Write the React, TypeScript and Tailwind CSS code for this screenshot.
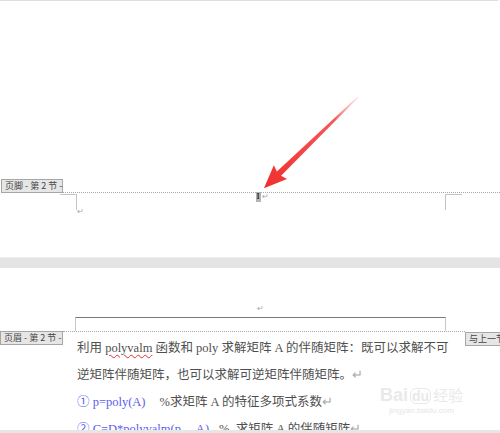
import React from "react";

const serif = { fontFamily: '"Liberation Serif", "Noto Sans CJK SC", serif' };
const sans = { fontFamily: '"Noto Sans CJK SC", "Liberation Sans", sans-serif' };

function Ret({ className = "" }: { className?: string }) {
  return <span className={"text-[#a8a8a8] " + className} style={sans}>↵</span>;
}

function Label({ text, className = "" }: { text: string; className?: string }) {
  return (
    <div
      className={"h-[14px] bg-[#e6e6e6] border border-[#a6a6a6] text-[#444] text-[9px] leading-[12px] px-[3px] whitespace-nowrap overflow-hidden " + className}
      style={sans}
    >
      {text}
    </div>
  );
}

function Arrow() {
  return (
    <svg className="absolute left-0 top-0 pointer-events-none" width="500" height="257">
      <defs>
        <linearGradient id="ag" x1="0" y1="0" x2="1" y2="0">
          <stop offset="0" stopColor="#ff6b6b" stopOpacity="0.15" />
          <stop offset="0.25" stopColor="#f53a3a" stopOpacity="0.85" />
          <stop offset="1" stopColor="#f02e2e" />
        </linearGradient>
      </defs>
      <g transform="translate(358,96) rotate(135.9)">
        <polygon
          points="0,-0.6 110,-3 108,-9.5 131,0 108,9.5 110,3 0,0.6"
          fill="url(#ag)"
        />
      </g>
    </svg>
  );
}

function Line({ children }: { children: React.ReactNode }) {
  return <div className="h-[27px] leading-[27px] overflow-visible">{children}</div>;
}

export default function App() {
  return (
    <div className="w-[500px] h-[433px] overflow-hidden bg-white relative">
      <div className="h-[1px] bg-[#dedede] w-[498px]" />
      {/* Page 1 footer */}
      <div className="relative h-[256px]">
        <div className="h-[178px]" />
        <div className="flex items-end">
          <Label text="页脚 - 第 2 节 -" className="ml-[1px] w-[62px]" />
          <div className="flex-1 border-b border-dotted border-[#a8a8a8] h-[1px]" />
        </div>
        <div className="flex mt-[1px]">
          <div className="w-[60px]" />
          <div className="w-[17px] h-[16px] border-t border-r border-[#c4c4c4]" />
          <div className="w-[368px] flex flex-col">
            <div className="flex justify-center items-start h-[11px] -mt-[2px] pl-[2px]">
              <div className="w-[5px] h-[10px] bg-[#b4b4b4] flex items-center justify-center text-[8px] leading-[8px] text-[#333] font-bold" style={serif}>I</div>
              <Ret className="text-[8px] leading-[8px] ml-[1px]" />
            </div>
            <div className="h-[12px] flex items-end">
              <Ret className="text-[8px] leading-[8px]" />
            </div>
          </div>
          <div className="w-[17px] h-[16px] border-t border-l border-[#c4c4c4]" />
        </div>
        <Arrow />
      </div>
      {/* gap between pages */}
      <div className="h-[11px] bg-[#e4e4e4] border-t border-[#efefef]" />
      {/* Page 2 */}
      <div className="relative h-[162px] overflow-hidden">
        <div className="h-[49px] flex items-end justify-center pb-[5px] pl-[20px]">
          <Ret className="text-[8px] leading-[8px]" />
        </div>
        <div className="ml-[75px] w-[371px] h-[14px] border-t border-t-[#7a7a7a] border-x border-x-[#c8c8c8]" />
        <div className="relative h-0">
          <div className="ml-[63px] w-[402px] border-t border-dotted border-[#a8a8a8]" />
          <Label text="页眉 - 第 2 节 -" className="absolute left-0 top-0 w-[63px]" />
          <Label text="与上一节相同" className="absolute left-[465px] top-[1px] w-[50px]" />
        </div>
        <div className="pl-[77px] pt-[4px] text-[12.5px] text-[#4f4f4f] whitespace-nowrap" style={serif}>
          <Line>
            利用 <span className="underline decoration-wavy decoration-[#e03030] decoration-[1px] underline-offset-2">polyvalm</span> 函数和 poly 求解矩阵 A 的伴随矩阵：既可以求解不可
          </Line>
          <Line>
            逆矩阵伴随矩阵，也可以求解可逆矩阵伴随矩阵。<Ret className="leading-none" />
          </Line>
          <Line>
            <span className="text-[#5d5df0]">① p=poly(A)</span>
            <span className="ml-[14px]">%求矩阵 A 的特征多项式系数</span>
            <Ret className="leading-none" />
          </Line>
          <Line>
            <span className="text-[#5d5df0]">② C=D*polyvalm(p， A)</span>
            <span className="ml-[10px]">%&nbsp;&nbsp;求矩阵 A 的伴随矩阵</span>
            <Ret className="leading-none" />
          </Line>
        </div>
        {/* watermark */}
        <div className="absolute left-[380px] top-[118px] flex flex-col items-center pointer-events-none opacity-60">
          <div className="flex items-end gap-[2px] text-[#dcdcdc] text-[18px] leading-[18px] font-bold" style={{ fontFamily: '"Liberation Sans", sans-serif' }}>
            <span>Bai</span>
            <span className="text-[14px] leading-[14px] border border-[#dcdcdc] rounded-[6px] px-[1px]">du</span>
            <span className="text-[15px] leading-[18px] font-normal" style={sans}>经验</span>
          </div>
          <div className="text-[8px] leading-[10px] text-[#d6d6d6] mt-[2px]" style={{ fontFamily: '"Liberation Sans", sans-serif' }}>
            jingyan.baidu.com
          </div>
        </div>
      </div>
      <div className="h-[3px] bg-[#e6e6e6]" />
    </div>
  );
}
